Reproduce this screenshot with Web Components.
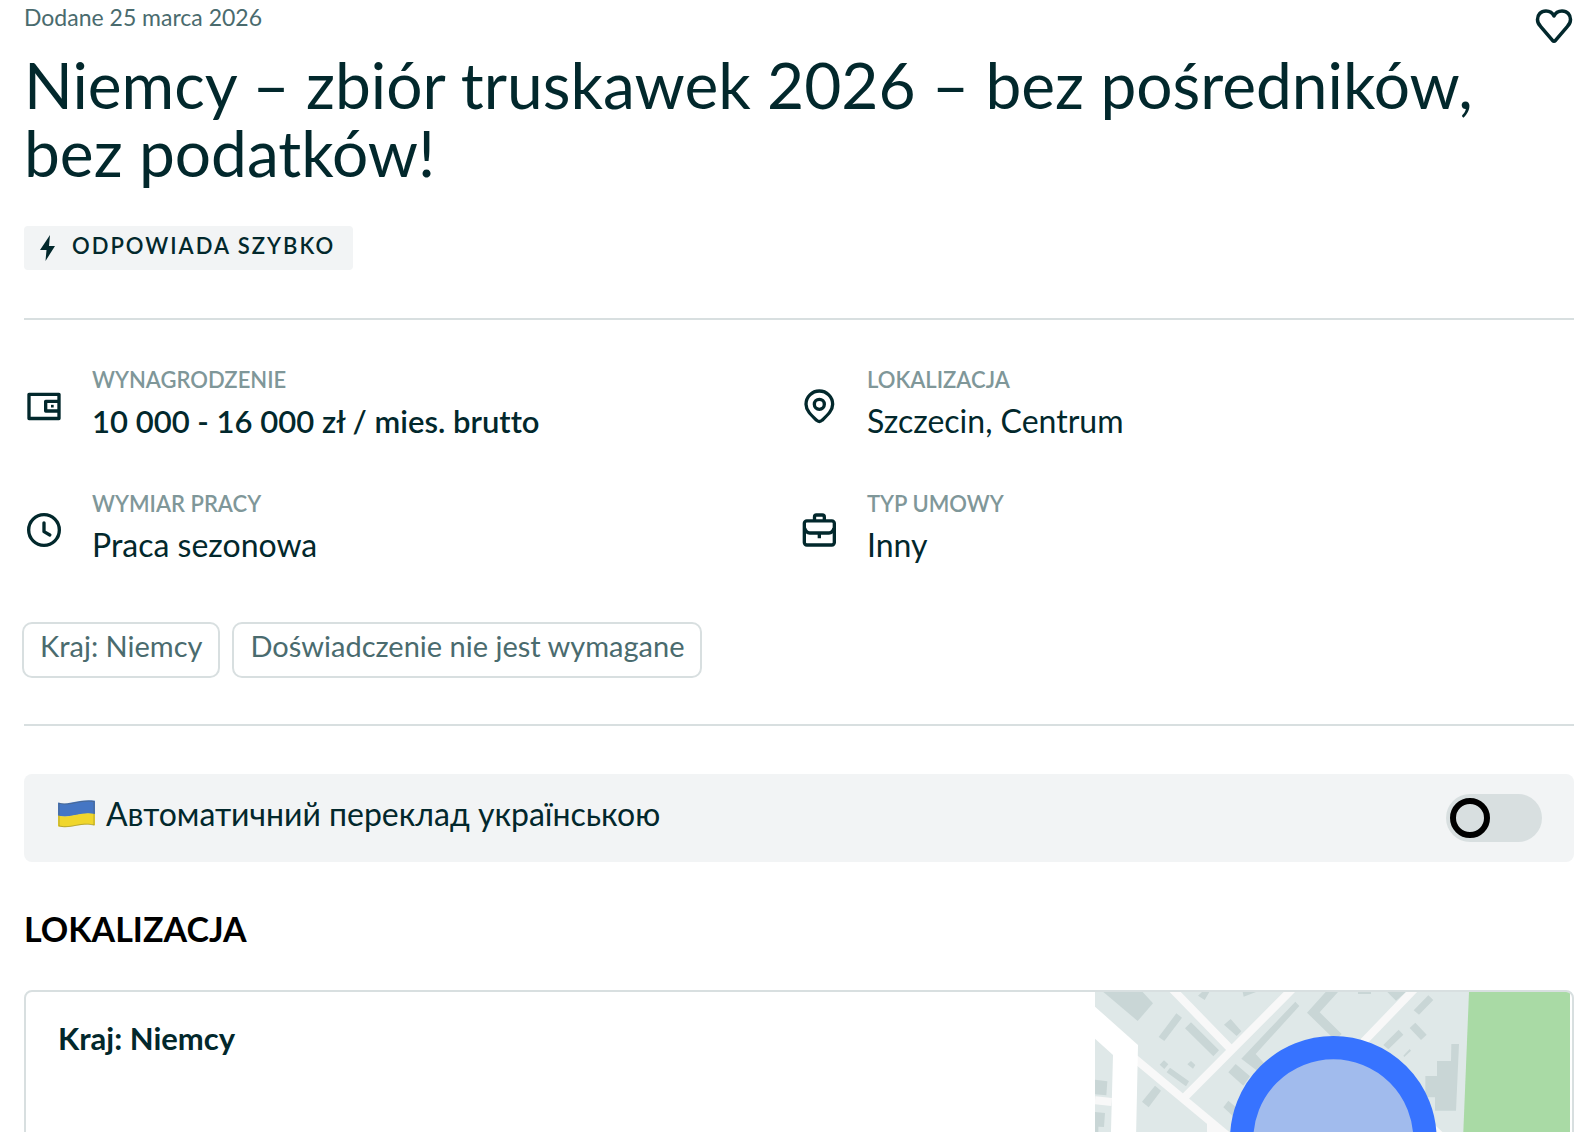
<!DOCTYPE html>
<html lang="pl">
<head>
<meta charset="UTF-8">
<meta name="viewport" content="width=device-width, initial-scale=1.0">
<title>Niemcy – zbiór truskawek 2026</title>
<style>
  body {
    margin: 0;
    background: #fff;
    color: #002f34;
    font-family: Lato, "Open Sans", sans-serif;
    font-variant-ligatures: none;
    --ink: #02282c;
    --muted: #4a6b6e;
    --label: #7f9799;
    --line: #d8dfe0;
    --soft: #f2f4f5;
  }
</style>
</head>
<body>
<job-page>
  <job-header date="Dodane 25 marca 2026" badge="Odpowiada szybko">Niemcy – zbiór truskawek 2026 – bez pośredników, bez podatków!</job-header>
  <job-section>
    <job-params>
      <job-param icon="wallet" label="Wynagrodzenie" strong>10 000 - 16 000 zł / mies. brutto</job-param>
      <job-param icon="pin" label="Lokalizacja">Szczecin, Centrum</job-param>
      <job-param icon="clock" label="Wymiar pracy">Praca sezonowa</job-param>
      <job-param icon="briefcase" label="Typ umowy">Inny</job-param>
    </job-params>
    <job-tags>
      <job-tag>Kraj: Niemcy</job-tag>
      <job-tag>Doświadczenie nie jest wymagane</job-tag>
    </job-tags>
  </job-section>
  <translate-bar lang="uk">Автоматичний переклад українською</translate-bar>
  <job-location heading="Lokalizacja">Kraj: Niemcy</job-location>
</job-page>

<script>
'use strict'

const icons = {
  wallet: `<path d="M3 5h18v14.500H3z"/><path d="M21 9.200h-8v5.800h8"/><path d="M16.200 11.300h1.600v1.600h-1.600z" fill="currentColor" stroke="none"/>`,
  pin: `<path d="M12.200 21.300c-.7 0-1.200-.3-1.700-.8C7 17.200 4.200 14.500 4.200 11a8 8 0 0 1 16 0c0 3.500-2.800 6.200-6.300 9.500-.5.500-1 .8-1.700.8z"/><circle cx="12.200" cy="11" r="3"/>`,
  clock: `<circle cx="12" cy="12" r="9.200"/><path d="M12 7.700V13l3.500 2" stroke-linecap="round"/>`,
  briefcase: `<path d="M9.300 6V4.200C9.300 3.500 9.700 3 10.400 3h3.600c.7 0 1.200.5 1.200 1.200V6"/><rect x="3.200" y="6.500" width="18" height="14.500" rx="1.500"/><path d="M3.400 11c.5 1.600 1.500 2.800 3 2.800H18c1.500 0 2.500-1.200 3-2.800M12.200 14v3"/>`
};

// shared by every element of the page
class JobElement extends HTMLElement {
  connectedCallback() {
    if (this.shadowRoot) return;
    this.attachShadow({ mode: 'open' });
    this.shadowRoot.innerHTML = this.render();
  }
}

class JobPage extends JobElement {
  render() {
    return `
      <style>
        :host {
          display: block;
          height: 100vh;
          overflow-y: auto;
          scrollbar-width: none;
        }
        main { padding: 0 14px 48px 24px; }
      </style>
      <main><slot></slot></main>
    `;
  }
}

class JobHeader extends JobElement {
  render() {
    return `
      <style>
        :host { display: block; padding-bottom: 48px; }
        .top {
          display: flex;
          justify-content: space-between;
          height: 51px;
        }
        .date {
          padding-top: 3px;
          font-size: 23px;
          line-height: 28px;
          color: var(--muted);
        }
        button {
          width: 40px;
          height: 52px;
          padding: 0;
          border: 0;
          background: none;
          color: var(--ink);
          cursor: pointer;
        }
        button svg { display: block; width: 40px; height: 52px; }
        h1 {
          margin: 0;
          color: var(--ink);
          font-size: 64px;
          line-height: 68px;
          font-weight: 400;
        }
        .badge {
          display: inline-flex;
          align-items: center;
          gap: 16px;
          height: 44px;
          margin-top: 39px;
          padding: 0 18px 0 16px;
          border-radius: 4px;
          background: var(--soft);
          color: var(--ink);
          font-size: 22px;
          line-height: 24px;
          font-weight: 600;
          letter-spacing: 2px;
          text-transform: uppercase;
          vertical-align: top;
        }
        .badge span { padding-bottom: 4px; }
      </style>
      <div class="top">
        <span class="date">${this.getAttribute('date')}</span>
        <button type="button" aria-label="Obserwuj">
          <svg viewBox="0 0 40 52" fill="none" stroke="currentColor" stroke-width="3.500" stroke-linejoin="round" aria-hidden="true">
            <path d="M20 16c-1.500-3.300-4.500-5-8-5C6.600 11 3.500 15 3.500 19.500c0 3 1.200 5 3 6.800L18.500 40.400q1.500 1.500 3 0L33.500 26.300c1.800-1.800 3-3.800 3-6.800C36.500 15 33.400 11 28 11c-3.500 0-6.500 1.700-8 5z"/>
          </svg>
        </button>
      </div>
      <h1><slot></slot></h1>
      <div class="badge">
        <svg width="16" height="26" viewBox="0 0 16 26" fill="currentColor" aria-hidden="true"><path d="M10 0L0 15h6.500L5.500 26 15 11H9z"/></svg>
        <span>${this.getAttribute('badge')}</span>
      </div>
    `;
  }
}

class JobSection extends JobElement {
  render() {
    return `
      <style>
        :host {
          display: block;
          padding: 44px 0 46px;
          border-top: 2px solid var(--line);
          border-bottom: 2px solid var(--line);
        }
      </style>
      <slot></slot>
    `;
  }
}

class JobParams extends JobElement {
  render() {
    return `
      <style>
        :host {
          display: grid;
          grid-template-columns: 1fr 1fr;
          row-gap: 40px;
        }
      </style>
      <slot></slot>
    `;
  }
}

class JobParam extends JobElement {
  render() {
    return `
      <style>
        :host {
          display: flex;
          align-items: center;
          gap: 28px;
          color: var(--ink);
        }
        svg { flex: none; width: 40px; height: 40px; }
        dl { margin: 0; padding-bottom: 2px; }
        dt {
          color: var(--label);
          font-size: 22px;
          line-height: 32px;
          font-weight: 600;
          text-transform: uppercase;
        }
        dd {
          margin: 0;
          font-size: 32px;
          line-height: 50px;
        }
        :host([strong]) dd { font-size: 31px; font-weight: 600; }
      </style>
      <svg viewBox="0 0 24 24" fill="none" stroke="currentColor" stroke-width="2" stroke-linejoin="round" aria-hidden="true">${icons[this.getAttribute('icon')]}</svg>
      <dl>
        <dt>${this.getAttribute('label')}</dt>
        <dd><slot></slot></dd>
      </dl>
    `;
  }
}

class JobTags extends JobElement {
  render() {
    return `
      <style>
        :host {
          display: flex;
          flex-wrap: wrap;
          gap: 12px;
          margin: 50px 0 0 -2px;
        }
      </style>
      <slot></slot>
    `;
  }
}

class JobTag extends JobElement {
  render() {
    return `
      <style>
        :host {
          display: block;
          padding: 4px 16px 12px;
          border: 2px solid var(--line);
          border-radius: 10px;
          color: var(--muted);
          font-size: 29px;
          line-height: 36px;
        }
      </style>
      <slot></slot>
    `;
  }
}

class TranslateBar extends JobElement {
  render() {
    return `
      <style>
        :host {
          display: flex;
          align-items: center;
          justify-content: space-between;
          height: 88px;
          margin-top: 48px;
          padding: 0 32px 0 34px;
          border-radius: 8px;
          background: var(--soft);
          color: var(--ink);
        }
        label {
          display: flex;
          align-items: center;
          gap: 11px;
          padding-bottom: 8px;
          font-size: 32px;
          line-height: 40px;
        }
        input {
          appearance: none;
          display: flex;
          align-items: center;
          width: 96px;
          height: 48px;
          margin: 0;
          padding: 4px;
          border-radius: 24px;
          background: #d8dfe0;
          cursor: pointer;
        }
        input::before {
          content: '';
          box-sizing: border-box;
          width: 40px;
          height: 40px;
          border: 6px solid #000;
          border-radius: 50%;
        }
        input:checked { justify-content: flex-end; }
      </style>
      <label for="translate">
        <svg width="37" height="28" viewBox="0 0 37 28" aria-hidden="true">
          <path d="M0 2.500C12 6 20-1.500 37 .8V14.500C22 11.500 14 19 0 16z" fill="#4576c4"/>
          <path d="M0 15.500C14 19 22 11 37 14v11.500C23 22 14 29.500 0 26.500z" fill="#f0d62c"/>
          <path d="M1 3.200C13 6.500 21-.8 36 1.500v23.600C22 21.500 14 29 1 26z" fill="none" stroke="#50503c" stroke-opacity=".35"/>
        </svg>
        <slot></slot>
      </label>
      <input type="checkbox" role="switch" id="translate">
    `;
  }
}

class JobLocation extends JobElement {
  render() {
    return `
      <style>
        :host { display: block; margin-top: 43px; }
        h2 {
          margin: 0 0 37px;
          color: #000;
          font-size: 34px;
          line-height: 48px;
          font-weight: 700;
          text-transform: uppercase;
        }
        .card {
          display: flex;
          justify-content: space-between;
          height: 304px;
          padding-right: 2px;
          border: 2px solid var(--line);
          border-radius: 8px;
          overflow: hidden;
        }
        p {
          margin: 0;
          padding: 24px 32px;
          color: var(--ink);
          font-size: 31px;
          line-height: 44px;
          font-weight: 700;
        }
        job-map { flex: 0 0 475px; }
      </style>
      <h2>${this.getAttribute('heading')}</h2>
      <div class="card">
        <p><slot></slot></p>
        <job-map></job-map>
      </div>
    `;
  }
}

class JobMap extends JobElement {
  render() {
    return `
      <style>
        :host { display: block; background: #dfe8e8; }
        svg { display: block; width: 100%; height: 100%; }
      </style>
      <svg viewBox="45 36 1425 912" preserveAspectRatio="xMidYMin slice" role="img" aria-label="Mapa">
        <g fill="#c9d6d6">
          <path d="M70 36h118l31 34-46 53z"/>
          <path d="M366 36h22l-14 24-20-13zM488 36h40l-37 14z"/>
          <path d="M289 100l17 13-53 70-17-12zM333 127l84 84-17 18-85-84zM452 117l32 37-14 14-38-34z"/>
          <path d="M252 241l13 12-12 14-14-13zM333 243l13 12-7 11-17-13zM270 263l57 41-9 15-58-42z"/>
          <path d="M225 317l18 15-37 50-20-17zM467 252l43 37-20 28-45-40zM445 362l40 35-14 22-41-37z"/>
          <path d="M646 65l12 13-131 144 35 38-15 24-63-48z"/>
          <path d="M737 36h37l-55 61 66 65-20 18-84-82zM834 36h39v6h-39zM922 36h56l-30 26z"/>
          <path d="M1045 46l15 14-43 44-16-13zM1006 128l34 36-17 16-34-36zM956 149l14 15-45 44-15-13zM989 207l4 5-20 19-3-4z"/>
          <path d="M1114 192h23l-9 200h-63v-40h-29v-64h35v-45h42z"/>
          <path d="M45 299l37 5-3 42-34-3zM45 396l30 3-3 42-17-1v20H45z"/>
        </g>
        <g fill="none" stroke="#f8f8f8" stroke-width="24">
          <path d="M274 24L452 207M640 24L310 356M1010 20L850 186M160 232L470 490M1020 410L1160 540M45 361L95 366"/>
        </g>
        <path d="M45 80L174 195 158 948H80L99 225 45 176z" fill="#fff"/>
        <path d="M381 430v40h60z" fill="#f8f8f8"/>
        <path d="M1167 36h303v912H1130z" fill="#a9daa5"/>
        <circle cx="760" cy="478" r="275" fill="#a1bbed" stroke="#3773ff" stroke-width="70"/>
      </svg>
    `;
  }
}

customElements.define('job-page', JobPage);
customElements.define('job-header', JobHeader);
customElements.define('job-section', JobSection);
customElements.define('job-params', JobParams);
customElements.define('job-param', JobParam);
customElements.define('job-tags', JobTags);
customElements.define('job-tag', JobTag);
customElements.define('translate-bar', TranslateBar);
customElements.define('job-map', JobMap);
customElements.define('job-location', JobLocation);
</script>
</body>
</html>
